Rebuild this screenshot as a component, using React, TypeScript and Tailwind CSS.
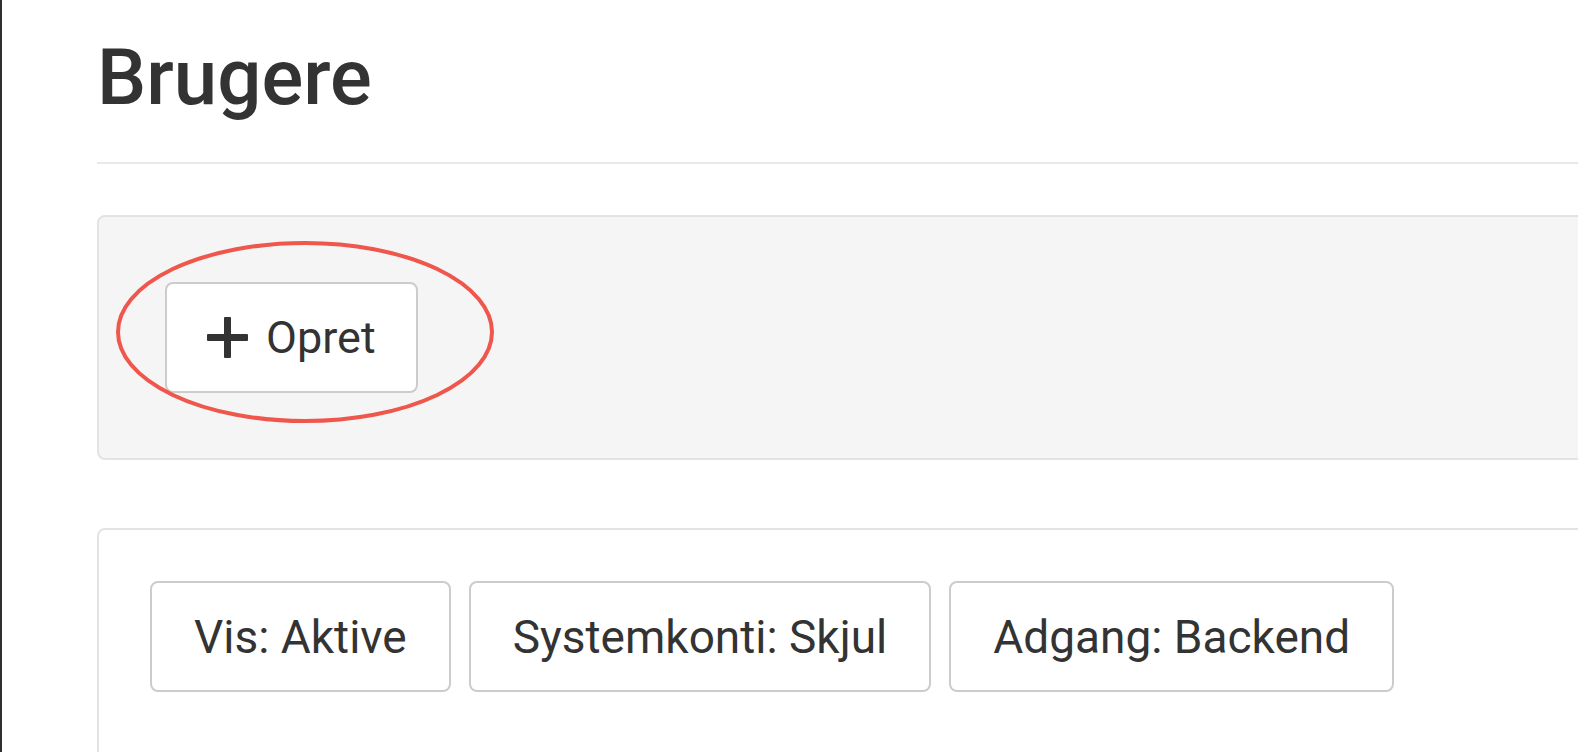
import React from 'react';

const filters = [
  { id: 'vis', label: 'Vis: Aktive' },
  { id: 'system', label: 'Systemkonti: Skjul' },
  { id: 'adgang', label: 'Adgang: Backend' },
];

const PlusIcon: React.FC = () => (
  <svg width="41" height="41" viewBox="0 0 41 41" className="shrink-0">
    <rect x="0" y="17" width="41" height="7" rx="1" fill="#333333" />
    <rect x="17" y="0" width="7" height="41" rx="1" fill="#333333" />
  </svg>
);

export default function App() {
  return (
    <div
      className="h-[752px] w-full overflow-hidden bg-white border-l-2 border-[#2f2f2f] text-[#333333]"
      style={{ fontFamily: 'Roboto, "Liberation Sans", sans-serif' }}
    >
      <div className="w-[1640px] pl-[95px]">
        {/* Page title */}
        <h1 className="pt-[39px] text-[78px] font-medium leading-none">Brugere</h1>
        <div className="mt-[45px] h-[2px] bg-[#e8e8e8]" />

        {/* Toolbar well */}
        <div className="relative mt-[51px] rounded-lg border-2 border-[#e3e3e3] bg-[#f5f5f5] px-[66px] py-[65px]">
          <button className="flex h-[111px] items-center gap-[18px] rounded-lg border-2 border-[#cccccc] bg-white pl-[40px] pr-[40px] text-[45px] leading-none text-[#333333]">
            <PlusIcon />
            <span>Opret</span>
          </button>

          {/* annotation ring */}
          <svg
            className="pointer-events-none absolute left-[16px] top-[23px]"
            width="380"
            height="184"
            viewBox="0 0 380 184"
          >
            <ellipse cx="190" cy="92" rx="187" ry="89" fill="none" stroke="#ef564c" strokeWidth="4" />
          </svg>
        </div>

        {/* Filter panel */}
        <div className="mt-[68px] h-[300px] rounded-lg border-2 border-[#e3e3e3] bg-white p-[51px]">
          <div className="flex gap-[18px]">
            {filters.map((f) => (
              <button
                key={f.id}
                className="flex h-[111px] items-center rounded-lg border-2 border-[#cccccc] bg-white px-[42px] text-[46px] leading-none text-[#333333]"
              >
                {f.label}
              </button>
            ))}
          </div>
        </div>
      </div>
    </div>
  );
}
